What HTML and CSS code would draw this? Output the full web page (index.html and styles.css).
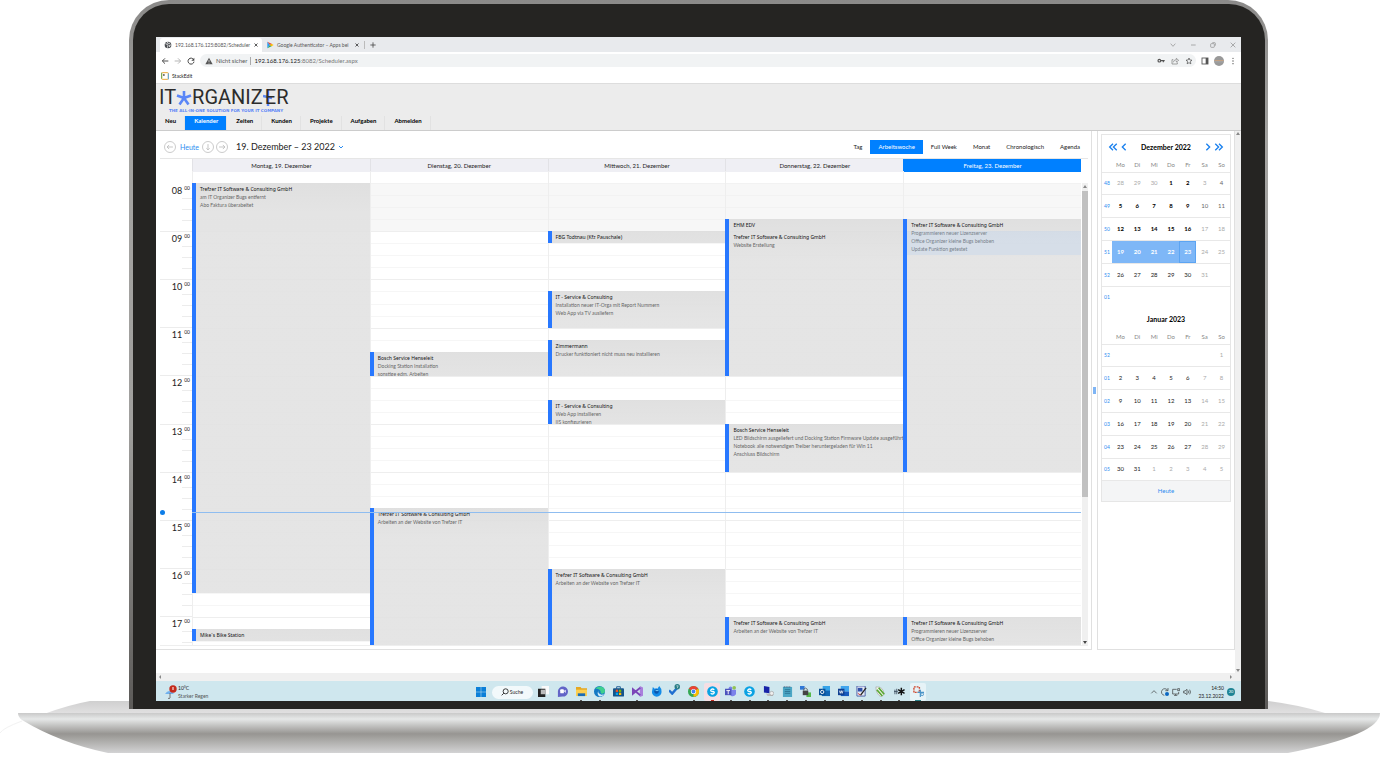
FILE: index.html
```html
<!DOCTYPE html>
<html lang="de">
<head>
    <meta charset="UTF-8">
    <meta name="viewport" content="width=device-width, initial-scale=1.0">
    <title>IT Organizer - Kalender</title>
    <link rel="stylesheet" href="styles.css">
</head>
<body>
<div class="laptop">
    <div class="lid">
        <div class="bezel">
            <div class="screen">

                <!-- Browser -->
                <div class="tabs">
                    <div class="tab active">
                        <svg class="ico8" viewBox="0 0 12 12"><circle cx="6" cy="6" r="5" fill="#4a4d51"/><path d="M2 4l3 1 1 2-1 3M6 1.500l-1 1.500 2 1 2-1M10.500 6L8 6.500 8.500 9" stroke="#fff" stroke-width="1.200" fill="none"/></svg>
                        <span class="tab-title">192.168.176.125:8082/Scheduler</span>
                        <button class="plain" aria-label="Tab schließen"><svg class="ico6" viewBox="0 0 12 12"><path d="M3 3l6 6M9 3l-6 6" stroke="#333" stroke-width="1.600"/></svg></button>
                    </div>
                    <div class="tab">
                        <svg class="ico8" viewBox="0 0 12 12"><path d="M2 1v10l4-5z" fill="#2b9df4"/><path d="M2 1l7 3.500L6 6z" fill="#e94335"/><path d="M2 11l7-3.500L6 6z" fill="#34a853"/><path d="M8 4l3.500 2L8 8 6 6z" fill="#fbbc04"/></svg>
                        <span class="tab-title">Google Authenticator – Apps bei</span>
                        <button class="plain" aria-label="Tab schließen"><svg class="ico6" viewBox="0 0 12 12"><path d="M3 3l6 6M9 3l-6 6" stroke="#333" stroke-width="1.600"/></svg></button>
                    </div>
                    <button class="plain new-tab" aria-label="Neuer Tab"><svg class="ico8" viewBox="0 0 12 12"><path d="M6 2v8M2 6h8" stroke="#444" stroke-width="1.200"/></svg></button>
                    <div class="window-buttons">
                        <svg class="ico8" viewBox="0 0 12 12"><path d="M2.500 4L6 8l3.500-4"/></svg>
                        <svg class="ico8" viewBox="0 0 12 12"><path d="M3 6h7"/></svg>
                        <svg class="ico8" viewBox="0 0 12 12"><rect x="2.500" y="4" width="5.500" height="5.500" rx="1"/><path d="M5 2.500h3.500q1 0 1 1V7"/></svg>
                        <svg class="ico8" viewBox="0 0 12 12"><path d="M2.500 2.500l7 7M9.500 2.500l-7 7"/></svg>
                    </div>
                </div>
                <div class="address-row">
                    <svg class="ico8" viewBox="0 0 12 12"><path d="M11 6H2M6 2L2 6l4 4" stroke="#444" stroke-width="1.400" fill="none"/></svg>
                    <svg class="ico8" viewBox="0 0 12 12"><path d="M1 6h9M6 2l4 4-4 4" stroke="#aaa" stroke-width="1.300" fill="none"/></svg>
                    <svg class="ico8" viewBox="0 0 12 12"><path d="M10 4A4.500 4.500 0 1 0 10.500 7" stroke="#444" stroke-width="1.500" fill="none"/><path d="M11 1v4.500H6.500z" fill="#444"/></svg>
                    <div class="address">
                        <svg class="ico8" viewBox="0 0 12 12"><path d="M6 1l5.500 10H.5z" fill="#555"/><path d="M6 4.500V8M6 9v1" stroke="#f1f3f4"/></svg>
                        <span class="insecure">Nicht sicher</span>
                        <span class="url"><b>192.168.176.125</b>:8082/Scheduler.aspx</span>
                        <span class="address-icons">
                            <svg class="ico8" viewBox="0 0 12 12"><circle cx="3.500" cy="5.500" r="2" stroke="#555" stroke-width="1.700" fill="none"/><path d="M5 5.500h6.500M9.500 6v2" stroke="#555" stroke-width="1.700"/></svg>
                            <svg class="ico8" viewBox="0 0 12 12"><path d="M3.500 4H1.500v6.500h8V8M3.500 8q.5-4 4.500-4V2l3.500 3L8 7.500V5.500" stroke="#777" fill="none"/></svg>
                            <svg class="ico8" viewBox="0 0 12 12"><path d="M6 1.500l1.300 3 3.200.3-2.400 2.100.7 3.300L6 8.500l-2.800 1.700.7-3.300L1.500 4.800l3.200-.3z" stroke="#444" fill="none"/></svg>
                        </span>
                    </div>
                    <svg class="ico8" viewBox="0 0 12 12"><rect x="1.500" y="1.500" width="9" height="9" fill="none" stroke="#555" stroke-width="1.300"/><path d="M7 1.500h3.500v9H7z" fill="#555"/></svg>
                    <svg class="ico10" viewBox="0 0 12 12"><circle cx="6" cy="6" r="6" fill="#999"/><path d="M.5 5h11v1H.500z" fill="#c9a27e"/><path d="M0 7h12" stroke="#aaa"/></svg>
                    <svg class="ico8" viewBox="0 0 12 12"><g fill="#555"><circle cx="6" cy="2" r="1"/><circle cx="6" cy="6" r="1"/><circle cx="6" cy="10" r="1"/></g></svg>
                </div>
                <div class="bookmarks">
                    <svg class="ico8" viewBox="0 0 12 12"><rect x="1" y="1" width="10" height="10" rx="1" fill="#fff" stroke="#e9a93a" stroke-width="1.500"/><path d="M11 2v9" stroke="#55a5e0" stroke-width="1.500"/><path d="M1 1v9" stroke="#6aa84f" stroke-width="1.500"/><path d="M3 3h2.500v3H3z" fill="#777"/></svg>
                    <span>StackEdit</span>
                </div>

                <!-- Kopfbereich -->
                <header class="app-header">
                    <div class="logo">
                        <div class="logo-name">
                            <span>IT</span>
                            <svg class="logo-star" viewBox="0 0 16 16"><path d="M8 8V1M8 8L1 5.500M8 8l7-2.500M8 8l-4.500 6.500M8 8l4.500 6.500" stroke="#5b86f7" stroke-width="2.600"/></svg>
                            <span>RGANIZ</span>
                            <svg class="logo-cross" viewBox="0 0 9 18"><path d="M5 1v16M0 7l9 2" stroke="#5b86f7" stroke-width="2.400"/></svg>
                            <span>ER</span>
                        </div>
                        <div class="logo-claim">THE ALL-IN-ONE SOLUTION FOR YOUR IT COMPANY</div>
                    </div>
                    <nav class="menu">
                        <a href="#">Neu</a>
                        <a href="#" class="active">Kalender</a>
                        <a href="#">Zeiten</a>
                        <a href="#">Kunden</a>
                        <a href="#">Projekte</a>
                        <a href="#">Aufgaben</a>
                        <a href="#">Abmelden</a>
                    </nav>
                </header>

                <div class="page">
                    <main class="workspace">
                        <section class="scheduler">
                            <div class="toolbar">
                                <button class="round" aria-label="Zurück"><svg viewBox="0 0 12 12"><path d="M9.500 6h-7M5 3.500L2.500 6 5 8.500"/></svg></button>
                                <button class="today">Heute</button>
                                <button class="round" aria-label="Datum wählen"><svg viewBox="0 0 12 12"><path d="M6 2.500v7M4 7.500l2 2 2-2"/></svg></button>
                                <button class="round" aria-label="Weiter"><svg viewBox="0 0 12 12"><path d="M2.500 6h7M7 3.500L9.500 6 7 8.500"/></svg></button>
                                <button class="range">19. Dezember – 23 2022 <svg class="ico6" viewBox="0 0 12 12"><path d="M2 4l4 4 4-4" stroke="#2b8cf0" stroke-width="2" fill="none"/></svg></button>
                                <div class="views">
                                    <button>Tag</button>
                                    <button class="active">Arbeitswoche</button>
                                    <button>Full Week</button>
                                    <button>Monat</button>
                                    <button>Chronologisch</button>
                                    <button>Agenda</button>
                                </div>
                            </div>
                            <div class="day-heads">
                                <span class="corner"></span>
                                <span>Montag, 19. Dezember</span>
                                <span>Dienstag, 20. Dezember</span>
                                <span>Mittwoch, 21. Dezember</span>
                                <span>Donnerstag, 22. Dezember</span>
                                <span class="active">Freitag, 23. Dezember</span>
                            </div>
                            <div class="all-day"><i></i><i></i><i></i><i></i><i></i><i></i></div>
                            <div class="time-grid">
                                <div class="ruler" id="ruler"></div>
                                <div class="days" id="days"></div>
                                <div class="scrollbar">
                                    <svg viewBox="0 0 6 8"><path d="M1 5l2-3 2 3z" fill="#888"/></svg>
                                    <div class="thumb"></div>
                                    <svg viewBox="0 0 6 8"><path d="M1 3l2 3 2-3z" fill="#444"/></svg>
                                </div>
                                <div class="now"></div>
                            </div>
                        </section>
                        <div class="splitter"><i></i></div>
                        <aside class="side">
                            <div class="mini">
                                <div class="mini-head">
                                    <button class="plain" aria-label="Jahr zurück"><svg class="ico10" viewBox="0 0 12 12"><path d="M6 2L2 6l4 4M10.500 2l-4 4 4 4"/></svg></button>
                                    <button class="plain" aria-label="Monat zurück"><svg class="ico10" viewBox="0 0 12 12"><path d="M8 2L4 6l4 4"/></svg></button>
                                    <b>Dezember 2022</b>
                                    <button class="plain" aria-label="Monat vor"><svg class="ico10" viewBox="0 0 12 12"><path d="M4 2l4 4-4 4"/></svg></button>
                                    <button class="plain" aria-label="Jahr vor"><svg class="ico10" viewBox="0 0 12 12"><path d="M1.500 2l4 4-4 4M6 2l4 4-4 4"/></svg></button>
                                </div>
                                <table id="december"></table>
                                <div class="mini-title">Januar 2023</div>
                                <table id="january"></table>
                                <button class="mini-today">Heute</button>
                            </div>
                        </aside>
                    </main>
                    <div class="page-scroll">
                        <svg viewBox="0 0 6 6"><path d="M1 4l2-3 2 3z"/></svg>
                        <svg viewBox="0 0 6 6"><path d="M1 2l2 3 2-3z"/></svg>
                    </div>
                    <div class="page-scroll-x">
                        <svg viewBox="0 0 6 6"><path d="M4 1L2 3l2 2z"/></svg>
                        <svg viewBox="0 0 6 6"><path d="M2 1l2 2-2 2z"/></svg>
                    </div>
                </div>

                <!-- Taskleiste -->
                <footer class="taskbar">
                    <div class="weather">
                        <svg viewBox="0 0 12 15"><path d="M0 9q4-6 9 0z" fill="#6fb1ee"/><path d="M5 8v5q-1 1.500-2 0" stroke="#777" fill="none"/><circle cx="8" cy="4" r="3.700" fill="#c42b1c"/><path d="M8 2v3" stroke="#fff"/></svg>
                        <div>10°C<br><span>Starker Regen</span></div>
                    </div>
                    <div class="task-center">
                        <svg class="ico10" viewBox="0 0 12 12"><path d="M0 0h5.700v5.700H0zM6.300 0H12v5.700H6.300zM0 6.300h5.700V12H0zM6.300 6.300H12V12H6.300z" fill="#0b7fd8"/></svg>
                        <button class="search"><svg class="ico8" viewBox="0 0 12 12"><circle cx="7" cy="5" r="3.800" stroke="#222" stroke-width="1.300" fill="none"/><path d="M4.300 7.700L1 11" stroke="#222" stroke-width="1.300"/></svg>Suche</button>
                        <div class="apps">
                            <span><svg viewBox="0 0 12 12"><path d="M4 0h8v9H4z" fill="#fafafa"/><path d="M0 3h8v9H0z" fill="#222"/><path d="M3 4h5v5H3z" fill="#bbb"/></svg></span>
                            <span><svg viewBox="0 0 12 12"><path d="M1 12V5.500A5.500 5.500 0 1 1 6 11.500z" fill="#6264c7"/><rect x="3.500" y="3.500" width="4" height="4.500" rx="1" fill="#fff"/><path d="M7.500 5.500L9.500 4v3.500z" fill="#fff"/></svg></span>
                            <span class="run"><svg viewBox="0 0 12 12"><path d="M0 1h5l1 1.500h6V11H0z" fill="#e5a823"/><path d="M0 4h12v7H0z" fill="#fccf50"/><path d="M2 8h8v3H2z" fill="#1c6db5"/></svg></span>
                            <span class="run"><svg viewBox="0 0 12 12"><circle cx="6" cy="6" r="6" fill="#1479c4"/><path d="M1 3.500C4-1.500 12 0 12 5.500 12 8.500 8 9 7 7.500 8.500 5 4 2 1 3.500z" fill="#3fcf8e"/><path d="M5 5q-1.500 3 3 4.500L11 9q-2 3-5 2.500Q2.500 9 5 5z" fill="#cfeafa"/></svg></span>
                            <span><svg viewBox="0 0 12 12"><path d="M4 3V.8h4V3" stroke="#195b94" fill="none"/><rect y="2.500" width="12" height="9" rx="1" fill="#14548c"/><path d="M3 4h2.500v2.500H3z" fill="#f25022"/><path d="M6.500 4H9v2.500H6.500z" fill="#7fba00"/><path d="M3 7.300h2.500v2.500H3z" fill="#00a4ef"/><path d="M6.500 7.300H9v2.500H6.500z" fill="#ffb900"/></svg></span>
                            <span class="run"><svg viewBox="0 0 12 12"><path d="M8.500 0L12 1.500v9L8.500 12z" fill="#a97fdc"/><path d="M9 2L1 8.500V3.500L9 10" stroke="#7a46b8" stroke-width="2" fill="none"/></svg></span>
                            <span><svg viewBox="0 0 12 12"><path d="M2 1l2 2q2-1 3 0l2-3q3 3 2.500 6.500A5 5 0 0 1 1 6.500z" fill="#138ce8"/><circle cx="6" cy="6" r="2.500" fill="#0a56ad"/><path d="M5 5h3" stroke="#7fd4ff"/></svg></span>
                            <span class="task-check"><svg viewBox="0 0 12 12"><path d="M0 7l3.500 3.500L9 4" stroke="#1f6fd0" stroke-width="2.600" fill="none"/><circle cx="9" cy="3" r="3" fill="#2a7f86"/><path d="M8 2h2L9 4.500" stroke="#fff" stroke-width=".6" fill="none"/></svg></span>
                            <span class="run"><svg viewBox="0 0 12 12"><circle cx="6" cy="6" r="6" fill="#34a853"/><path d="M6 6L.8 3A6 6 0 0 1 11.200 3z" fill="#ea4335"/><path d="M6 6l5.200-3A6 6 0 0 1 6 12z" fill="#fbbc04"/><circle cx="6" cy="6" r="2.800" fill="#fff"/><circle cx="6" cy="6" r="2.100" fill="#4285f4"/></svg></span>
                            <span class="run alert"><svg viewBox="0 0 12 12"><circle cx="6" cy="6" r="5.800" fill="#0aa2e3"/><path d="M8 4Q6 2.500 4.500 4T6 6t1.500 2T4 8" stroke="#fff" stroke-width="1.400" fill="none"/></svg></span>
                            <span class="run"><svg viewBox="0 0 12 12"><circle cx="6" cy="2.500" r="2" fill="#7b83eb"/><path d="M5 4h7v5q-3 4-6 1z" fill="#7b83eb"/><rect y="3" width="7" height="7" fill="#4b53bc"/><path d="M1.500 5h4M3.500 5v4" stroke="#fff"/><circle cx="10" cy="2" r="2" fill="#92c353"/></svg></span>
                            <span class="run"><svg viewBox="0 0 12 12"><circle cx="6" cy="6" r="5.800" fill="#0aa2e3"/><path d="M8 4Q6 2.500 4.500 4T6 6t1.500 2T4 8" stroke="#fff" stroke-width="1.400" fill="none"/></svg></span>
                            <span class="run"><svg viewBox="0 0 12 12"><path d="M1 0l6 1v7L1 7z" fill="#1723a8"/><path d="M3 8l4 1 4-1v3H5z" fill="#bbb"/><circle cx="9.500" cy="8" r="2.200" fill="#eee" stroke="#888" stroke-width=".5"/></svg></span>
                            <span class="run"><svg viewBox="0 0 12 12"><path d="M1 1h10v11H1z" fill="#4ba7c5"/><path d="M2 1h8" stroke="#335" stroke-dasharray="1 1"/><path d="M3 4h6M3 6h6M3 8h6" stroke="#205f80" stroke-width=".7"/></svg></span>
                            <span class="run"><svg viewBox="0 0 12 12"><path d="M0 0h5v4H0z" fill="#2f78d6"/><path d="M7 7h5v5H7z" fill="#55b948"/><rect x="3" y="5" width="6" height="5" fill="#444"/><path d="M4 5V3.500Q6 1 8 3.500V5" stroke="#666" fill="none"/></svg></span>
                            <span class="run"><svg viewBox="0 0 12 12"><path d="M4 0h8v6H4z" fill="#35a3e8"/><path d="M3 5h9v6H3z" fill="#1266b5"/><rect y="3" width="7" height="7" fill="#0a4f96"/><circle cx="3.500" cy="6.500" r="1.800" stroke="#fff" fill="none"/></svg></span>
                            <span class="run"><svg viewBox="0 0 12 12"><path d="M3 0h9v6H3z" fill="#41a5ee"/><path d="M3 6h9v5H3z" fill="#185abd"/><rect y="3" width="7" height="7" fill="#103f91"/><path d="M1.500 5l1 3 1-3 1 3 1-3" stroke="#fff" stroke-width=".8" fill="none"/></svg></span>
                            <span class="run"><svg viewBox="0 0 12 12"><path d="M1 0h9v11H1z" fill="#e5e9f4" stroke="#4a5ea8"/><path d="M2 2h5v4H2z" fill="#3150a8"/><path d="M11 2L5 10" stroke="#222" stroke-width="1.400"/><path d="M2 8l3 2" stroke="#c33"/></svg></span>
                            <span class="run"><svg viewBox="0 0 12 12"><path d="M1 1q8-1 9 8l-3 3Q1 9 1 1z" fill="#f4f4ec" stroke="#888" stroke-width=".5"/><path d="M2 4l6 7M4 2l6 7" stroke="#57a732" stroke-width="1.800"/></svg></span>
                            <span class="run"><svg viewBox="0 0 12 12"><path d="M1 4v5M0 6h4M3 3v6" stroke="#456" stroke-width="1"/><path d="M8 2v8M4.500 4l7 4M11.500 4l-7 4" stroke="#111" stroke-width="1.600"/></svg></span>
                            <span class="run current"><svg viewBox="0 0 12 12"><path d="M1 1h6v6H1z" stroke="#d04a31" stroke-width="1.500" stroke-dasharray="2 1" fill="none"/><path d="M5 7h7M8 4v8" stroke="#4a94c8" stroke-width="1.300"/><circle cx="10" cy="9" r="1.500" fill="none" stroke="#4a94c8"/></svg></span>
                        </div>
                    </div>
                    <div class="tray">
                        <svg class="ico8" viewBox="0 0 12 12"><path d="M2 8l4-4 4 4"/></svg>
                        <svg class="ico8" viewBox="0 0 12 12"><path d="M10 3.500A5 5 0 1 0 5 11M10.500 0v4h-4"/><circle cx="9" cy="9" r="3" fill="#0b67c2" stroke="none"/></svg>
                        <svg class="ico8" viewBox="0 0 12 12"><path d="M7 2H1v7h9V6M3 11.500h5M5.500 9v2M8.500 1h3v3h-3z"/></svg>
                        <svg class="ico8" viewBox="0 0 12 12"><path d="M1 4.500h2l3-2.500v8L3 7.500H1zM8 4q1.500 2 0 4M10 2.500q2.500 3.500 0 7"/></svg>
                        <div class="clock">14:50<br>23.12.2022</div>
                        <span class="count">20</span>
                    </div>
                </footer>
            </div>
        </div>
    </div>
    <svg class="base" viewBox="0 0 1380 52" preserveAspectRatio="none">
        <defs>
            <linearGradient id="deck" x1="0" y1="0" x2="0" y2="1">
                <stop offset="0" stop-color="#cfcfcf"/>
                <stop offset="1" stop-color="#e2e1e2"/>
            </linearGradient>
            <linearGradient id="metal" x1="0" y1="0" x2="0" y2="1">
                <stop offset="0" stop-color="#c9c9c9"/>
                <stop offset=".15" stop-color="#e6e8e8"/>
                <stop offset=".52" stop-color="#979592"/>
                <stop offset=".62" stop-color="#a3a29f"/>
                <stop offset="1" stop-color="#d3d3d4"/>
            </linearGradient>
        </defs>
        <path d="M0 32Q3 27 22 20" fill="none" stroke="#f2f2f2"/>
        <path d="M44 13Q68 4 90 0H1268Q1300 4 1325 12z" fill="url(#deck)"/>
        <path d="M18 12H1380Q1380 34 1288 52H108Q60 42 22 19 18 16 18 12z" fill="url(#metal)"/>
    </svg>
</div>
<script src="script.js"></script>
</body>
</html>
```
FILE: styles.css
```css
* {
    box-sizing: border-box;
}
body {
    margin: 0;
    background: #fff;
    font-family: Lato, "Open Sans", sans-serif;
    font-size: 6px;
    line-height: 8px;
    color: #222;
}
button {
    margin: 0;
    padding: 0;
    border: none;
    background: none;
    font: inherit;
    color: inherit;
    cursor: pointer;
}
a {
    color: inherit;
    text-decoration: none;
}
svg {
    display: block;
    flex: none;
}
.plain {
    display: flex;
}
.ico6 {
    width: 6px;
    height: 6px;
}
.ico8 {
    width: 8px;
    height: 8px;
}
.ico10 {
    width: 10px;
    height: 10px;
}

/* Laptop */
.laptop {
    overflow: hidden;
}
.lid {
    position: relative;
    z-index: 1;
    margin: 0 112px 0 129px;
    padding: 4px 3px 0 4px;
    border-radius: 40px 40px 0 0;
    background: linear-gradient(#8b8a89, #a5a4a2 20%, #a09f9d 60%, #5c5a58);
}
.bezel {
    margin-bottom: -4px;
    padding: 33px 24px 8px 23px;
    border-radius: 36px 36px 0 0;
    background: #252422;
}
.base {
    width: 100%;
    height: 52px;
    margin-top: -8px;
}
.screen {
    background: #fff;
    overflow: hidden;
}

/* Browser */
.tabs {
    display: flex;
    align-items: center;
    height: 15px;
    padding: 1px 4px 0;
    background: #e8eaed;
}
.tab {
    display: flex;
    align-items: center;
    gap: 3px;
    width: 102px;
    height: 14px;
    padding: 0 4px;
    border-radius: 3px 3px 0 0;
    font-size: 5px;
    color: #555;
}
.tab.active {
    background: #fff;
}
.tab-title {
    flex: 1;
    white-space: nowrap;
}
.new-tab {
    padding-left: 4px;
    border-left: 1px solid #bbb;
}
.window-buttons {
    display: flex;
    gap: 12px;
    margin-left: auto;
}
.window-buttons svg {
    fill: none;
    stroke: #888;
}
.address-row {
    display: flex;
    align-items: center;
    gap: 5px;
    height: 17px;
    padding: 0 4px 0 5px;
}
.address {
    display: flex;
    flex: 1;
    align-items: center;
    gap: 3px;
    height: 13px;
    padding: 0 3px 0 5px;
    border-radius: 7px;
    background: #f1f3f4;
    color: #777;
}
.insecure {
    padding-right: 3px;
    border-right: 1px solid #aaa;
    color: #555;
}
.url b {
    font-weight: normal;
    color: #222;
}
.address-icons {
    display: flex;
    gap: 6px;
    margin-left: auto;
}
.bookmarks {
    display: flex;
    align-items: center;
    gap: 3px;
    height: 15px;
    padding: 0 5px;
    border-bottom: 1px solid #ddd;
    font-size: 5px;
}

/* Kopfbereich */
.app-header {
    background: #ececec;
    border-bottom: 1px solid #ccc;
}
.logo {
    height: 32px;
    padding: 2px 3px 0;
}
.logo-name {
    display: flex;
    align-items: center;
    height: 23px;
    font-family: Roboto, sans-serif;
    font-size: 20px;
    line-height: 23px;
    color: #2c2c2c;
}
.logo-star {
    width: 16px;
    height: 16px;
}
.logo-cross {
    width: 9px;
    height: 18px;
    margin-right: -7px;
}
.logo-claim {
    padding-left: 10px;
    font-family: "DejaVu Sans", sans-serif;
    font-size: 4px;
    line-height: 4px;
    font-weight: bold;
    color: #5b86f7;
}
.menu {
    display: flex;
    height: 14px;
    font-weight: bold;
    line-height: 10px;
    color: #000;
}
.menu a {
    padding: 0 8px 0 9px;
    border-right: 1px solid #e2e2e2;
}
.menu a.active {
    background: #0080ff;
    color: #fff;
}

/* Seite */
.page {
    display: grid;
    grid-template-columns: 1fr 6px;
}
.workspace {
    display: flex;
    padding-bottom: 23px;
}
.page-scroll {
    display: flex;
    flex-direction: column;
    justify-content: space-between;
    background: #f0f0f0;
}
.page-scroll-x {
    display: flex;
    grid-column: 1 / -1;
    align-items: center;
    justify-content: space-between;
    height: 8px;
    padding: 0 7px 0 1px;
    background: #f0f0f0;
}
.page-scroll svg, .page-scroll-x svg {
    width: 6px;
    height: 6px;
    fill: #888;
}

/* Kalender */
.scheduler {
    flex: 1;
    padding: 0 3px 3px 4px;
    border-right: 1px solid #e0e0e0;
    border-bottom: 1px solid #e0e0e0;
}
.toolbar {
    display: flex;
    align-items: center;
    height: 28px;
    padding: 4px 0 0 4px;
    border-bottom: 1px solid #e6e6e6;
}
.round {
    width: 12px;
    height: 12px;
    margin-right: 2px;
    border: 1px solid #ccc;
    border-radius: 50%;
}
.round svg {
    fill: none;
    stroke: #bbb;
}
.today {
    margin: 0 3px 0 2px;
    font-size: 7px;
    color: #2b8cf0;
}
.range {
    display: flex;
    align-items: center;
    gap: 3px;
    margin-left: 6px;
    font-size: 9px;
}
.views {
    display: flex;
    margin-left: auto;
}
.views button {
    height: 14px;
    padding: 0 8px;
}
.views .active {
    background: #0080ff;
    color: #fff;
}
.day-heads, .all-day {
    display: grid;
    grid-template-columns: 32px repeat(5, 1fr);
    height: 12px;
    margin-right: 7px;
    text-align: center;
    line-height: 13px;
}
.day-heads span {
    background: #efeff4;
    border-left: 1px solid #e2e2e6;
}
.day-heads .corner {
    border: none;
    background: none;
}
.day-heads .active {
    border-color: #0080ff;
    background: #0080ff;
    color: #fff;
}
.all-day i + i {
    border-left: 1px solid #eee;
}
.time-grid {
    position: relative;
    display: grid;
    grid-template-columns: 32px 1fr 7px;
    height: 463px;
    overflow: hidden;
    border-bottom: 1px solid #eee;
}
.ruler, .day {
    display: grid;
    grid-template-rows: repeat(39, 1fr);
    height: 470px;
}
.ruler {
    grid-template-columns: 22px 10px;
}
.tick {
    grid-column: 2;
    border-top: 1px solid #ececec;
}
.hour {
    display: flex;
    grid-column: 1 / -1;
    justify-content: flex-end;
    gap: 2px;
    padding-right: 2px;
    border-top: 1px solid #ececec;
    font-size: 9px;
    line-height: 14px;
}
.hour:first-child {
    border-color: transparent;
}
.hour sup {
    font-size: 5px;
    line-height: 9px;
    vertical-align: top;
}
.days {
    display: grid;
    grid-template-columns: repeat(5, 1fr);
}
.day {
    grid-template-columns: 100%;
    border-left: 1px solid #eee;
}
.slot {
    grid-column: 1;
    border-top: 1px solid #f6f6f6;
}
.slot.full {
    border-color: #eee;
}
.slot.closed {
    border-color: #f2f2f2;
    background: #f7f7f7;
}
.event {
    grid-column: 1;
    z-index: 1;
    min-height: 0;
    overflow: hidden;
    margin-left: -1px;
    padding: 2px 0 0 4px;
    border-left: 4px solid #2878ff;
    background: linear-gradient(rgba(221, 221, 221, .9), rgba(226, 226, 226, .9) 30px);
    color: #111;
    white-space: nowrap;
}
.event b {
    display: block;
    font-family: "Noto Sans", "Open Sans", sans-serif;
    font-weight: normal;
    font-size: 5px;
}
.event p {
    margin: 0;
    font-size: 5px;
    color: #666;
}
.marked {
    grid-column: 1;
    z-index: 2;
    margin-left: 3px;
    background: rgba(170, 205, 245, .25);
}
.now {
    position: absolute;
    z-index: 3;
    top: 329px;
    left: 32px;
    right: 7px;
    height: 1px;
    background: #8fbdf0;
}
.now::before {
    content: "";
    position: absolute;
    top: -2px;
    left: -32px;
    width: 5px;
    height: 5px;
    border-radius: 50%;
    background: #0d7de8;
}
.scrollbar {
    display: flex;
    flex-direction: column;
    height: 463px;
    margin-left: 1px;
    background: #f0f0f0;
}
.scrollbar svg {
    width: 6px;
    height: 8px;
}
.thumb {
    height: 306px;
    margin-bottom: auto;
    background: #c1c1c1;
}
.splitter {
    display: flex;
    align-items: center;
    width: 5px;
    padding-left: 1px;
}
.splitter i {
    width: 3px;
    height: 7px;
    background: #7fb5f5;
}

/* Monatsübersicht */
.side {
    width: 138px;
    padding: 3px;
    border: 1px solid #e0e0e0;
    border-top: none;
}
.mini {
    border: 1px solid #e6e6e6;
}
.mini-head {
    display: flex;
    align-items: center;
    gap: 1px;
    height: 23px;
    padding: 0 6px;
    font-size: 7px;
    color: #000;
}
.mini-head b {
    flex: 1;
    text-align: center;
}
.mini-head svg {
    fill: none;
    stroke: #1a80ee;
    stroke-width: 1.600;
}
.mini-title {
    height: 22px;
    font-size: 7px;
    font-weight: bold;
    line-height: 22px;
    text-align: center;
    color: #000;
}
.mini table {
    width: 100%;
    height: 150px;
    table-layout: fixed;
    border-collapse: collapse;
    text-align: center;
}
.mini th, .mini td {
    padding: 0;
    font-weight: normal;
}
.mini thead tr {
    height: 14px;
}
.mini thead th {
    color: #888;
}
.mini thead th:first-child {
    width: 10px;
}
.mini tbody tr {
    border-top: 1px solid #e8e8e8;
}
.mini tbody th {
    font-size: 5px;
    color: #2b8cf0;
}
.mini td:nth-child(n+7), .mini td.other {
    color: #aaa;
}
.mini td.near {
    color: #666;
}
.mini td.busy {
    font-weight: bold;
    color: #000;
}
.mini td.selected {
    background: #7eb7f7;
    font-weight: bold;
    color: #fff;
}
.mini td.current {
    box-shadow: inset 0 0 0 1px #5ca4f2;
}
.mini-today {
    display: block;
    width: 100%;
    height: 21px;
    border-top: 1px solid #e8e8e8;
    background: #f4f5f6;
    color: #2b8cf0;
}

/* Taskleiste */
.taskbar {
    display: grid;
    grid-template-columns: 1fr auto 1fr;
    align-items: center;
    height: 20px;
    padding: 2px 3px 0 9px;
    background: #cfe7ee;
    font-size: 5px;
    color: #222;
}
.weather {
    display: flex;
    align-items: center;
    gap: 1px;
}
.weather svg {
    width: 12px;
    height: 15px;
}
.weather span {
    color: #555;
}
.task-center {
    display: flex;
    align-items: center;
    gap: 6px;
}
.search {
    display: flex;
    align-items: center;
    justify-content: center;
    gap: 1px;
    width: 41px;
    height: 13px;
    margin-right: -4px;
    border-radius: 7px;
    background: #f2f9fb;
}
.apps {
    display: grid;
    grid-template-columns: repeat(21, 1fr);
    justify-items: center;
    width: 393px;
}
.apps span {
    display: flex;
    flex-direction: column;
    align-items: center;
    width: 16px;
    height: 18px;
    padding-top: 3px;
    border-radius: 2px;
}
.apps svg {
    width: 11px;
    height: 11px;
}
.apps .task-check {
    padding-top: 1px;
}
.apps .run::after {
    content: "";
    width: 2px;
    height: 1px;
    margin-top: 3px;
    background: #555;
}
.apps .alert {
    background: #f5dfe4;
}
.apps .alert::after {
    width: 3px;
    background: #c42b1c;
}
.apps .current {
    background: #e6f3f7;
}
.apps .current::after {
    width: 6px;
    background: #2a7f86;
}
.tray {
    display: flex;
    align-items: center;
    justify-content: flex-end;
    gap: 3px;
    padding-right: 3px;
}
.tray svg {
    fill: none;
    stroke: #333;
}
.clock {
    margin-left: 4px;
    text-align: right;
}
.count {
    width: 8px;
    height: 8px;
    border-radius: 50%;
    background: #1f8494;
    color: #fff;
    font-size: 4px;
    text-align: center;
}
```
FILE: script.js
```javascript
const firstHour = 8;
const slotCount = 39;

// start und length in Viertelstunden ab 08:00
const week = [
    [
        { start: 0, length: 34, title: 'Trefzer IT Software & Consulting GmbH', text: ['am IT Organizer Bugs entfernt', 'Abo Faktura überabeitet'] },
        { start: 37, length: 1, title: 'Mike´s Bike Station', text: [] }
    ],
    [
        { start: 14, length: 2, title: 'Bosch Service Henseleit', text: ['Docking Station Installation', 'sonstige edm. Arbeiten'] },
        { start: 27, length: 12, title: 'Trefzer IT Software & Consulting GmbH', text: ['Arbeiten an der Website von Trefzer IT'] }
    ],
    [
        { start: 4, length: 1, title: 'FBG Todtnau (Kfz Pauschale)', text: [] },
        { start: 9, length: 3, title: 'IT - Service & Consulting', text: ['Installation neuer IT-Orga mit Report Nummern', 'Web App via TV ausliefern'] },
        { start: 13, length: 3, title: 'Zimmermann', text: ['Drucker funktioniert nicht muss neu installieren'] },
        { start: 18, length: 2, title: 'IT - Service & Consulting', text: ['Web App installieren', 'IIS konfigurieren'] },
        { start: 32, length: 7, title: 'Trefzer IT Software & Consulting GmbH', text: ['Arbeiten an der Website von Trefzer IT'] }
    ],
    [
        { start: 3, length: 1, title: 'EHM EDV', text: [] },
        { start: 4, length: 12, title: 'Trefzer IT Software & Consulting GmbH', text: ['Website Erstellung'] },
        { start: 20, length: 4, title: 'Bosch Service Henseleit', text: ['LED Bildschirm ausgeliefert und Docking Station Firmware Update ausgeführt', 'Notebook alle notwendigen Treiber heruntergeladen für Win 11', 'Anschluss Bildschirm'] },
        { start: 36, length: 3, title: 'Trefzer IT Software & Consulting GmbH', text: ['Arbeiten an der Website von Trefzer IT'] }
    ],
    [
        { start: 3, length: 21, title: 'Trefzer IT Software & Consulting GmbH', text: ['Programmieren neuer Lizenzserver', 'Office Organizer kleine Bugs behoben', 'Update Funktion getestet'] },
        { start: 36, length: 3, title: 'Trefzer IT Software & Consulting GmbH', text: ['Programmieren neuer Lizenzserver', 'Office Organizer kleine Bugs behoben', 'Update Funktion getestet'] }
    ]
];

function add(parent, tag, className, text) {
    const el = document.createElement(tag);
    if (className) el.className = className;
    if (text !== undefined) el.textContent = text;
    parent.appendChild(el);
    return el;
}

const ruler = document.getElementById('ruler');
for (let i = 0; i < slotCount; i++) {
    if (i % 4 === 0) {
        const hour = add(ruler, 'div', 'hour', String(firstHour + i / 4).padStart(2, '0'));
        hour.style.gridRow = i + 1;
        add(hour, 'sup', '', '00');
    } else {
        add(ruler, 'div', 'tick').style.gridRow = i + 1;
    }
}

const days = document.getElementById('days');
week.forEach((events, index) => {
    const day = add(days, 'div', 'day');
    for (let i = 0; i < slotCount; i++) {
        const slot = add(day, 'div', 'slot' + (i % 4 ? '' : ' full') + (i < 4 ? ' closed' : ''));
        slot.style.gridRow = i + 1;
    }
    events.forEach(event => {
        const box = add(day, 'div', 'event');
        box.style.gridRow = `${event.start + 1} / span ${event.length}`;
        add(box, 'b', '', event.title);
        event.text.forEach(line => add(box, 'p', '', line));
    });
    if (index === 4) {
        add(day, 'div', 'marked').style.gridRow = '5 / span 2';
    }
});

function drawMonth(id, weeks, rows, classFor) {
    const table = document.getElementById(id);
    const head = add(add(table, 'thead'), 'tr');
    ['', 'Mo', 'Di', 'Mi', 'Do', 'Fr', 'Sa', 'So'].forEach(name => add(head, 'th', '', name));
    const body = add(table, 'tbody');
    rows.forEach((row, r) => {
        const tr = add(body, 'tr');
        add(tr, 'th', '', weeks[r]);
        row.forEach(day => add(tr, 'td', classFor(day, r), day));
    });
}

drawMonth('december', ['48', '49', '50', '51', '52', '01'], [
    [28, 29, 30, 1, 2, 3, 4],
    [5, 6, 7, 8, 9, 10, 11],
    [12, 13, 14, 15, 16, 17, 18],
    [19, 20, 21, 22, 23, 24, 25],
    [26, 27, 28, 29, 30, 31, ''],
    ['', '', '', '', '', '', '']
], (day, r) => {
    if (r === 0 && day > 20) return 'other';
    if ([4, 10, 11].includes(day)) return 'near';
    if (day === 23) return 'selected current';
    if (day >= 19 && day <= 22) return 'selected';
    return day && r < 3 && ![3, 17, 18].includes(day) ? 'busy' : '';
});

drawMonth('january', ['52', '01', '02', '03', '04', '05'], [
    ['', '', '', '', '', '', 1],
    [2, 3, 4, 5, 6, 7, 8],
    [9, 10, 11, 12, 13, 14, 15],
    [16, 17, 18, 19, 20, 21, 22],
    [23, 24, 25, 26, 27, 28, 29],
    [30, 31, 1, 2, 3, 4, 5]
], (day, r) => r === 5 && day < 6 ? 'other' : '');
```
